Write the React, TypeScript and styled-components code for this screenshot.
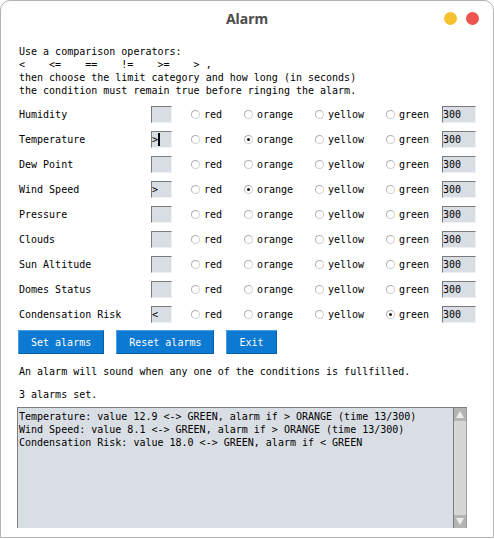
import React from "react";
import styled, { createGlobalStyle } from "styled-components";

const GlobalStyle = createGlobalStyle`
  html, body { margin: 0; padding: 0; background: #ffffff; }
  body { font-family: "DejaVu Sans Mono", "Liberation Mono", monospace; }
  * { box-sizing: border-box; }
`;

const Window = styled.div`
  width: 494px;
  height: 538px;
  border: 1px solid #b3b3b3;
  border-radius: 10px 10px 0 0;
  background: #ffffff;
  display: flex;
  flex-direction: column;
  overflow: hidden;
`;

const TitleBar = styled.div`
  height: 35px;
  flex: none;
  display: grid;
  grid-template-columns: 1fr auto 1fr;
  align-items: center;
  padding: 0 14px 1px 14px;
`;

const Title = styled.div`
  grid-column: 2;
  font-family: "Noto Sans", "Open Sans", sans-serif;
  font-weight: 700;
  font-size: 14px;
  color: #4d4d4d;
`;

const Controls = styled.div`
  grid-column: 3;
  justify-self: end;
  display: flex;
  gap: 9px;
`;

const Dot = styled.span<{ $color: string }>`
  width: 13px;
  height: 13px;
  border-radius: 50%;
  background: ${(p) => p.$color};
`;

const Content = styled.div`
  flex: 1;
  display: flex;
  flex-direction: column;
  padding: 9px 26px 0 18px;
  font-family: "DejaVu Sans Mono", "Liberation Mono", monospace;
  font-size: 10px;
  color: #000;
`;

const Intro = styled.div`
  white-space: pre;
  line-height: 13px;
`;

const Rows = styled.div`
  margin-top: 5px;
  display: flex;
  flex-direction: column;
`;

const Row = styled.div`
  height: 25px;
  display: grid;
  grid-template-columns: 132px 40px 53px 71px 71px 56px 34px;
  align-items: center;
`;

const Label = styled.span`
  white-space: pre;
  line-height: 13px;
`;

const Entry = styled.div<{ $width: number }>`
  width: ${(p) => p.$width}px;
  height: 17px;
  background: #d9dde4;
  border-top: 1px solid #7a7a7a;
  border-left: 1px solid #7a7a7a;
  border-right: 1px solid #eef0f3;
  border-bottom: 1px solid #eef0f3;
  display: flex;
  align-items: center;
  line-height: 15px;
  padding-left: 0;
  white-space: pre;
`;

const Cursor = styled.span`
  width: 2px;
  height: 13px;
  background: #000;
`;

const Radio = styled.label`
  display: flex;
  align-items: center;
  gap: 4px;
  line-height: 13px;
`;

const Indicator = styled.span<{ $on: boolean }>`
  width: 9px;
  height: 9px;
  border-radius: 50%;
  border: 1px solid #cfcfcf;
  border-top-color: #b0b0b0;
  border-left-color: #b0b0b0;
  background: #ffffff;
  display: flex;
  align-items: center;
  justify-content: center;
  &::after {
    content: "";
    width: 3px;
    height: 3px;
    border-radius: 50%;
    background: ${(p) => (p.$on ? "#1a1a1a" : "transparent")};
  }
`;

const ButtonRow = styled.div`
  margin-top: 3px;
  margin-left: -1px;
  display: flex;
  gap: 12px;
`;

const Button = styled.button`
  height: 24px;
  padding: 0 12px;
  background: #0c79d2;
  color: #ffffff;
  border: 1px solid;
  border-color: #4a9de0 #0a5ea5 #0a5ea5 #4a9de0;
  font-family: "DejaVu Sans Mono", "Liberation Mono", monospace;
  font-size: 10px;
  line-height: 13px;
  cursor: pointer;
`;

const Line = styled.div<{ $top: number }>`
  margin-top: ${(p) => p.$top}px;
  line-height: 13px;
  white-space: pre;
`;

const Output = styled.div`
  margin-top: 6px;
  margin-left: -2px;
  height: 121px;
  display: flex;
  border-top: 1px solid #7d7d7d;
`;

const OutputText = styled.div`
  flex: 1;
  background: #d9dde4;
  border-left: 1px solid #7d7d7d;
  padding: 2px 0 0 1px;
  white-space: pre;
  line-height: 13px;
`;

const Scrollbar = styled.div`
  width: 14px;
  display: flex;
  flex-direction: column;
  background: #d6d6d6;
  border-left: 1px solid #7d7d7d;
  border-right: 1px solid #9a9a9a;
`;

const ArrowBtn = styled.div`
  height: 13px;
  background: #b4b4b4;
  display: flex;
  align-items: center;
  justify-content: center;
`;

const Trough = styled.div`
  flex: 1;
  background: #d6d6d6;
`;

type RowData = { name: string; op: string; cursor?: boolean; sel: string | null };

const rows: RowData[] = [
  { name: "Humidity", op: "", sel: null },
  { name: "Temperature", op: ">", cursor: true, sel: "orange" },
  { name: "Dew Point", op: "", sel: null },
  { name: "Wind Speed", op: ">", sel: "orange" },
  { name: "Pressure", op: "", sel: null },
  { name: "Clouds", op: "", sel: null },
  { name: "Sun Altitude", op: "", sel: null },
  { name: "Domes Status", op: "", sel: null },
  { name: "Condensation Risk", op: "<", sel: "green" },
];

const levels = ["red", "orange", "yellow", "green"];

const Arrow: React.FC<{ up: boolean }> = ({ up }) => (
  <svg width="10" height="9" viewBox="0 0 10 9">
    <polygon points={up ? "5,1 9,8 1,8" : "1,1 9,1 5,8"} fill="#ececec" />
  </svg>
);

export default function App() {
  return (
    <>
      <GlobalStyle />
      <Window>
        <TitleBar>
          <Title>Alarm</Title>
          <Controls>
            <Dot $color="#f5c22d" />
            <Dot $color="#ef5350" />
          </Controls>
        </TitleBar>
        <Content>
          <Intro>
            {"Use a comparison operators:\n<    <=    ==    !=    >=    > ,\nthen choose the limit category and how long (in seconds)\nthe condition must remain true before ringing the alarm."}
          </Intro>
          <Rows>
            {rows.map((r) => (
              <Row key={r.name}>
                <Label>{r.name}</Label>
                <Entry $width={21}>
                  {r.op}
                  {r.cursor && <Cursor />}
                </Entry>
                {levels.map((l) => (
                  <Radio key={l}>
                    <Indicator $on={r.sel === l} />
                    {l}
                  </Radio>
                ))}
                <Entry $width={34}>300</Entry>
              </Row>
            ))}
          </Rows>
          <ButtonRow>
            <Button>Set alarms</Button>
            <Button>Reset alarms</Button>
            <Button>Exit</Button>
          </ButtonRow>
          <Line $top={11}>An alarm will sound when any one of the conditions is fullfilled.</Line>
          <Line $top={10}>3 alarms set.</Line>
          <Output>
            <OutputText>
              {"Temperature: value 12.9 <-> GREEN, alarm if > ORANGE (time 13/300)\nWind Speed: value 8.1 <-> GREEN, alarm if > ORANGE (time 13/300)\nCondensation Risk: value 18.0 <-> GREEN, alarm if < GREEN"}
            </OutputText>
            <Scrollbar>
              <ArrowBtn>
                <Arrow up />
              </ArrowBtn>
              <Trough />
              <ArrowBtn>
                <Arrow up={false} />
              </ArrowBtn>
            </Scrollbar>
          </Output>
        </Content>
      </Window>
    </>
  );
}
